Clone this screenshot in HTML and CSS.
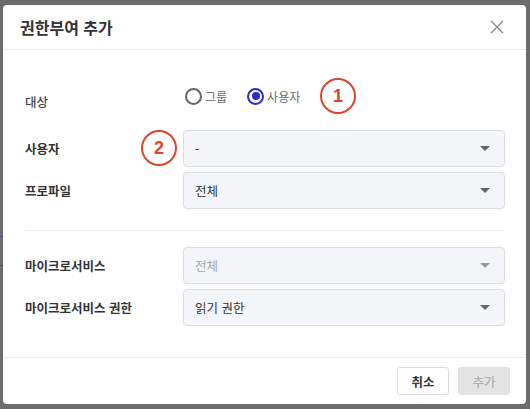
FILE: index.html
```html
<!DOCTYPE html>
<html lang="ko">
<head>
<meta charset="utf-8">
<link rel="stylesheet" href="styles.css">
</head>
<body>
<div class="bg-mark"></div>
<div class="modal">
  <div class="modal-header">
    <h1 class="title">권한부여 추가</h1>
    <svg class="close" width="14" height="14" viewBox="0 0 14 14"><path d="M1 1L13 13M13 1L1 13" stroke="#8a8a8a" stroke-width="1.4" fill="none"/></svg>
  </div>
  <div class="modal-body">
    <div class="row row-radio">
      <div class="label">대상</div>
      <div class="control radios">
        <label class="radio"><span class="dot"></span><span class="rtext">그룹</span></label>
        <label class="radio checked"><span class="dot"></span><span class="rtext">사용자</span></label>
        <span class="badge badge-1">1</span>
      </div>
    </div>
    <div class="row row-first">
      <div class="label">사용자</div>
      <div class="select"><span>-</span><i class="caret"></i></div>
      <span class="badge badge-2">2</span>
    </div>
    <div class="row">
      <div class="label">프로파일</div>
      <div class="select"><span>전체</span><i class="caret"></i></div>
    </div>
    <div class="divider"></div>
    <div class="row">
      <div class="label">마이크로서비스</div>
      <div class="select disabled"><span>전체</span><i class="caret"></i></div>
    </div>
    <div class="row">
      <div class="label">마이크로서비스 권한</div>
      <div class="select"><span>읽기 권한</span><i class="caret"></i></div>
    </div>
  </div>
  <div class="modal-footer">
    <button class="btn">취소</button>
    <button class="btn btn-disabled">추가</button>
  </div>
</div>
</body>
</html>
```

FILE: styles.css
```css
* { box-sizing: border-box; }
html, body { margin: 0; height: 100%; }
body {
  background: #6c6c6c;
  padding: 5px 4px 5px 3px;
  font-family: "Noto Sans CJK KR", "Noto Sans", sans-serif;
  position: relative;
}
.bg-mark {
  position: absolute;
  left: 0;
  top: 236px;
  width: 3px;
  height: 30px;
  border-top: 1px solid #4a4a9a;
  border-bottom: 1px solid #4a4a9a;
}
.modal {
  background: #fff;
  border-radius: 4px;
  height: 399px;
  display: flex;
  flex-direction: column;
  position: relative;
}
.modal-header {
  height: 45px;
  border-bottom: 1px solid #ececec;
  display: flex;
  align-items: center;
  justify-content: space-between;
  padding: 0 22px 0 17px;
}
.title {
  margin: 0;
  font-size: 16px;
  font-weight: 700;
  color: #333;
}
.close { display: block; }
.modal-body {
  padding: 28px 21px 0 22px;
  flex: 1;
  position: relative;
}
.row {
  display: grid;
  grid-template-columns: 158px 1fr;
  align-items: center;
  margin-top: 5px;
}
.row-radio { height: 36px; margin-top: 0; }
.row-first { margin-top: 16px; }
.label {
  font-size: 12.5px;
  font-weight: 700;
  color: #333;
}
.row-radio .label { font-weight: 500; color: #444; padding-top: 10px; }
.radios {
  display: flex;
  align-items: center;
  gap: 0;
  padding-left: 2px;
}
.radio {
  display: flex;
  align-items: center;
  font-size: 12px;
  color: #6a6a6a;
  margin-right: 20px;
}
.dot {
  width: 17px;
  height: 17px;
  border: 2px solid #666;
  border-radius: 50%;
  margin-right: 3px;
  position: relative;
}
.checked .dot { border-color: #2a2ad0; }
.checked .dot::after {
  content: "";
  position: absolute;
  left: 2.5px;
  top: 2.5px;
  width: 8px;
  height: 8px;
  border-radius: 50%;
  background: #2a2ad0;
}
.badge {
  position: absolute;
  width: 36px;
  height: 36px;
  border: 2px solid #e0452b;
  border-radius: 50%;
  color: #e0452b;
  font-size: 18px;
  font-weight: 700;
  display: flex;
  align-items: center;
  justify-content: center;
  font-family: "Liberation Sans", Arial, sans-serif;
  background: transparent;
}
.badge-1 { left: 317px; top: 28px; }
.badge-2 { left: 138px; top: 80px; }
.select {
  height: 37px;
  background: #f4f5f8;
  border: 1px solid #dcdde1;
  border-radius: 4px;
  display: flex;
  align-items: center;
  justify-content: space-between;
  padding: 0 14px 0 11px;
  font-size: 12.5px;
  color: #333;
}
.select.disabled { color: #a5a5a5; }
.caret {
  width: 0;
  height: 0;
  border-left: 5px solid transparent;
  border-right: 5px solid transparent;
  border-top: 5px solid #666;
}
.disabled .caret { border-top-color: #999; }
.divider {
  height: 1px;
  background: #ececf0;
  margin: 21px 0 16px 0;
}
.modal-footer {
  height: 47px;
  border-top: 1px solid #ececec;
  display: flex;
  align-items: center;
  justify-content: flex-end;
  gap: 9px;
  padding-right: 16px;
}
.btn {
  font-family: inherit;
  height: 28px;
  width: 52px;
  border: 1px solid #dcdcdc;
  background: #fff;
  border-radius: 3px;
  font-size: 12.5px;
  font-weight: 700;
  color: #333;
  padding: 0;
}
.btn-disabled {
  background: #e3e3e3;
  border-color: #e3e3e3;
  color: #b0b0b0;
  font-weight: 500;
}
```
